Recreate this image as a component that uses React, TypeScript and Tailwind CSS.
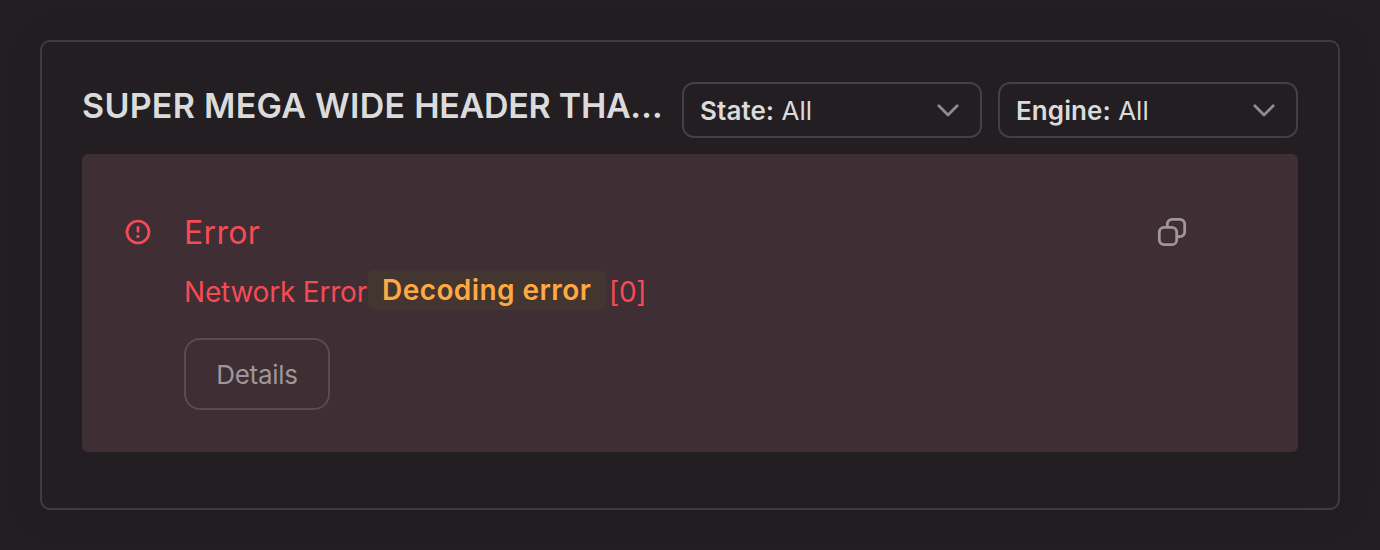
function Select({ name }: { name: string }) {
  return (
    <button className="flex h-14 w-[300px] shrink-0 items-center justify-between rounded-[12px] border-2 border-[#433f43] pl-4 pr-5 text-[26px] leading-8 text-[#dcdbdc]">
      <span className="whitespace-pre pt-0.5"><span className="font-semibold tracking-[0.08px]">{name}:</span> All</span>
      <svg width="24" height="24" viewBox="0 0 24 24" fill="none" stroke="#8f8c8f" strokeWidth="2.8" strokeLinecap="round" strokeLinejoin="round">
        <path d="M2.8 7.8L12 17L21.2 7.8" />
      </svg>
    </button>
  );
}

export default function App() {
  return (
    <div className="h-[550px] w-[1380px] bg-[#221e22] p-10 font-['Inter',sans-serif]">
      <div className="h-[470px] rounded-[10px] border-2 border-[#3d3c40] p-10 shadow-[0_2px_40px_rgba(0,0,0,0.12)]">
        <div className="flex h-14 gap-4">
          <h1 className="min-w-0 flex-1 whitespace-nowrap text-[34px] font-semibold leading-[48px] text-[#dcdbdc]">
            <span className="tracking-[0.27px]">SUPER MEGA WIDE </span>
            <span className="tracking-[-0.3px]">HEADER THA…</span>
          </h1>
          <Select name="State" />
          <Select name="Engine" />
        </div>
        <div className="mt-4 flex h-[298px] rounded-[6px] bg-[#3f2e33] pl-[42px] pt-[60px]">
          <svg className="mt-[4px] shrink-0" width="28" height="28" viewBox="0 0 28 28" fill="none" stroke="#f64a55" strokeWidth="2.7" strokeLinecap="round">
            <circle cx="14" cy="14" r="11" />
            <path d="M14 9.3V13.3" />
            <circle cx="14" cy="18.4" r="1.7" fill="#f64a55" stroke="none" />
          </svg>
          <div className="ml-8 flex-1">
            <div className="text-[32px] leading-[38px] tracking-[0.3px] text-[#f64a55]">Error</div>
            <div className="mt-[18px] flex h-10 items-center whitespace-pre text-[28px] text-[#f64a55]">
              <span className="w-[184px] pt-1 tracking-[-0.2px]">Network Error</span>
              <span className="flex h-10 w-[238px] items-center rounded-[6px] bg-[#433630] pl-3.5 font-semibold tracking-[0.43px] text-[#ffa943]">Decoding error</span>
              <span className="ml-[3px] pt-1 tracking-[-0.3px]">[0]</span>
            </div>
            <button className="mt-7 h-[72px] w-[146px] rounded-[16px] border-2 border-[#5b4c50] text-[26px] tracking-[-0.25px] text-[#9f9699]">Details</button>
          </div>
          <svg className="mr-[110px] mt-[3px] shrink-0" width="32" height="32" viewBox="0 0 32 32" fill="none" stroke="#9f9699" strokeWidth="2.8">
            <rect x="3.3" y="10.3" width="17.4" height="17.4" rx="4.8" />
            <path d="M11.3 10.3V7.1a4.8 4.8 0 0 1 4.8-4.8h7.8a4.8 4.8 0 0 1 4.8 4.8v7.8a4.8 4.8 0 0 1-4.8 4.8h-3.2" />
          </svg>
        </div>
      </div>
    </div>
  );
}
